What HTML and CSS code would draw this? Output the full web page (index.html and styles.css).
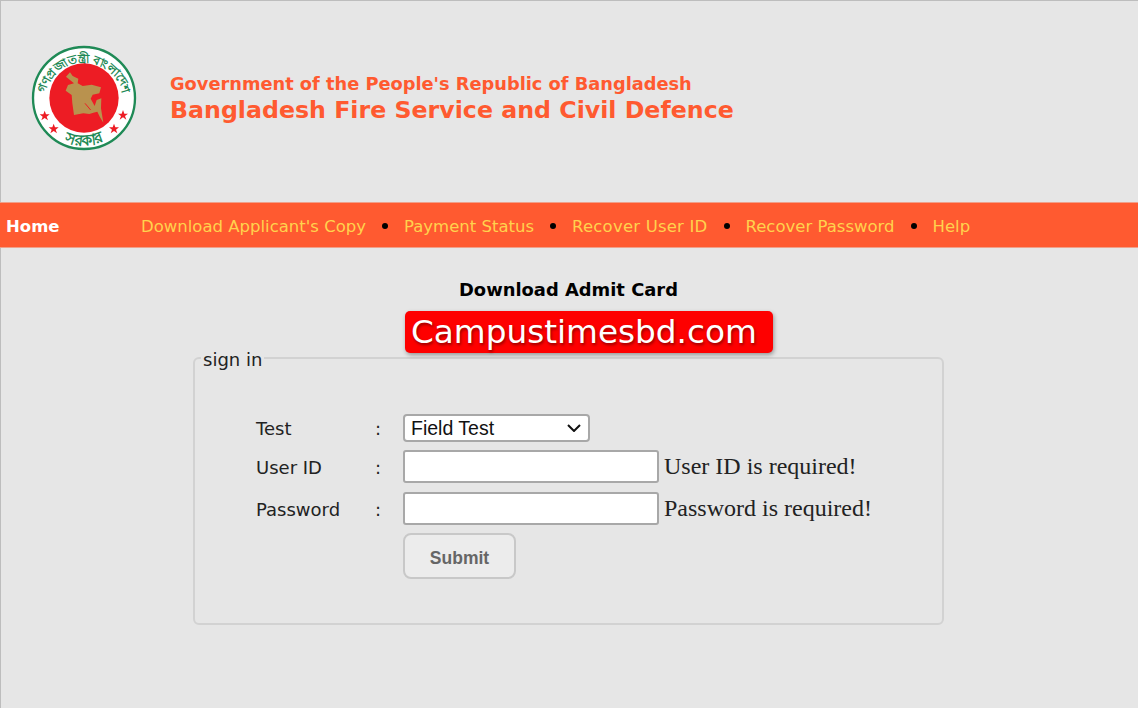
FILE: index.html
```html
<!DOCTYPE html>
<html lang="en">
<head>
<meta charset="utf-8">
<title>Bangladesh Fire Service and Civil Defence</title>
<link rel="stylesheet" href="styles.css">
</head>
<body>
<div class="page">
  <header class="masthead">
    <svg class="seal" viewBox="93 132 324 324" aria-hidden="true">
      <circle cx="252" cy="294" r="153" fill="#fff" stroke="#1f8a56" stroke-width="7"/>
      <path id="arcTop" d="M134 306 A118 118 0 1 1 370 306" fill="none"/>
      <path id="arcBottom" d="M180 418 A143 143 0 0 0 324 418" fill="none"/>
      <text class="seal-text"><textPath href="#arcTop" startOffset="50%" text-anchor="middle">গণপ্রজাতন্ত্রী বাংলাদেশ</textPath></text>
      <text class="seal-text seal-text-low"><textPath href="#arcBottom" startOffset="50%" text-anchor="middle">সরকার</textPath></text>
      <circle cx="252" cy="294" r="104" fill="#ed1c24"/>
      <path d="M198 230 L210 217 L218 228 L235 236 L233 250 L248 258 L275 254 L303 262 L298 280 L278 284 L272 296 L284 318 L290 300 L304 295 L303 325 L310 368 L300 352 L292 335 L280 338 L268 342 L250 340 L222 345 L217 310 L215 285 L197 272 L204 255 L222 250 L210 240 Z" fill="#b9924e"/>
      <path d="M255 310 L272 330" stroke="#ed1c24" stroke-width="3" fill="none"/>
      <g fill="#ed1c24">
        <path d="M134 332 l4 11 h11 l-9 7 l4 11 l-10 -7 l-10 7 l4 -11 l-9 -7 h11 Z"/>
        <path d="M161 371 l4 11 h11 l-9 7 l4 11 l-10 -7 l-10 7 l4 -11 l-9 -7 h11 Z"/>
        <path d="M342 371 l4 11 h11 l-9 7 l4 11 l-10 -7 l-10 7 l4 -11 l-9 -7 h11 Z"/>
        <path d="M369 330 l4 11 h11 l-9 7 l4 11 l-10 -7 l-10 7 l4 -11 l-9 -7 h11 Z"/>
      </g>
    </svg>
    <div class="brand">
      <div class="brand-gov">Government of the People's Republic of Bangladesh</div>
      <div class="brand-org">Bangladesh Fire Service and Civil Defence</div>
    </div>
  </header>

  <nav class="nav">
    <a class="nav-home" href="#">Home</a>
    <div class="nav-links">
      <a href="#">Download Applicant's Copy</a>
      <span class="dot"></span>
      <a href="#">Payment Status</a>
      <span class="dot"></span>
      <a class="nav-wide" href="#">Recover User ID</a>
      <span class="dot"></span>
      <a href="#">Recover Password</a>
      <span class="dot"></span>
      <a href="#">Help</a>
    </div>
  </nav>

  <main class="content">
    <h1 class="title">Download Admit Card</h1>
    <div class="watermark">Campustimesbd.com</div>
    <fieldset class="panel">
      <legend>sign in</legend>
      <form class="form">
        <label class="lbl" for="test">Test</label>
        <span class="colon">:</span>
        <div class="field">
          <select id="test" class="select"><option>Field Test</option></select>
        </div>
        <label class="lbl" for="uid">User ID</label>
        <span class="colon">:</span>
        <div class="field">
          <input id="uid" class="input" type="text">
          <span class="err">User ID is required!</span>
        </div>
        <label class="lbl" for="pwd">Password</label>
        <span class="colon">:</span>
        <div class="field">
          <input id="pwd" class="input" type="password">
          <span class="err">Password is required!</span>
        </div>
        <div class="field actions">
          <button class="submit" type="button">Submit</button>
        </div>
      </form>
    </fieldset>
  </main>
</div>
</body>
</html>
```
FILE: styles.css
```css
* { box-sizing: border-box; }
html, body { margin: 0; height: 100%; }
body {
  background: #e6e6e6;
  font-family: "DejaVu Sans", Verdana, sans-serif;
  overflow: hidden;
}
.page {
  height: 708px;
  border-top: 1px solid #bdbdbd;
  border-left: 1px solid #bdbdbd;
}
.masthead {
  height: 201px;
  display: flex;
  align-items: flex-start;
  padding: 43px 0 0 30px;
}
.seal { width: 108px; height: 108px; flex: none; }
.seal-text {
  font-family: "Noto Sans", "DejaVu Sans", sans-serif;
  font-size: 36px;
  font-weight: 700;
  fill: #1f8a56;
}
.seal-text-low { font-size: 46px; }
.brand { margin: 29px 0 0 31px; color: #ff5a30; font-weight: 700; }
.brand-gov { font-size: 17.8px; line-height: 22px; }
.brand-org { font-size: 23.7px; line-height: 31px; }
.nav {
  height: 46px;
  margin-left: -1px;
  padding-top: 2px;
  background: #ff5a30;
  border-top: 1px solid #f0a08a;
  border-bottom: 1px solid #f0a08a;
  display: flex;
  align-items: center;
  font-size: 16.5px;
}
.nav a { text-decoration: none; color: #ffd24d; white-space: nowrap; }
.nav .nav-home { color: #fff; font-weight: 700; width: 141px; padding-left: 6px; flex: none; }
.nav .nav-wide { letter-spacing: .2px; }
.nav-links { display: flex; align-items: center; }
.dot { width: 6px; height: 6px; border-radius: 50%; background: #000; margin: 0 16px; flex: none; }
.content { position: relative; padding-top: 31px; }
.title {
  margin: 0;
  font-size: 17.9px;
  line-height: 22px;
  font-weight: 700;
  color: #000;
  text-align: center;
  width: 1135px;
}
.watermark {
  position: absolute;
  left: 404px;
  top: 63px;
  width: 368px;
  height: 42px;
  padding: 0 0 0 6px;
  background: #fe0000;
  border-radius: 5px;
  color: #fff;
  font-family: "DejaVu Sans", sans-serif;
  font-size: 32.7px;
  line-height: 42px;
  white-space: nowrap;
  box-shadow: 1px 2px 4px rgba(0,0,0,.35);
  text-shadow: 1px 2px 3px rgba(120,0,0,.8);
}
.panel {
  margin: 45px 0 0 192px;
  width: 751px;
  height: 279px;
  padding: 0;
  border: 2px solid #d2d2d2;
  border-radius: 6px;
}
.panel legend {
  margin-left: 6px;
  padding: 4px 2px 0;
  font-size: 18px;
  line-height: 20px;
  color: #222;
}
.form {
  display: grid;
  grid-template-columns: 119px 28px 1fr;
  row-gap: 9px;
  align-items: center;
  padding: 44px 0 0 61px;
  font-size: 18px;
  color: #222;
}
.lbl, .colon { padding-top: 2px; }
.field { display: flex; align-items: center; }
.actions { grid-column: 3; }
.select {
  appearance: none;
  width: 187px;
  height: 28px;
  margin-bottom: -1px;
  padding: 0 6px;
  background: #fff url("data:image/svg+xml,%3Csvg xmlns='http://www.w3.org/2000/svg' width='14' height='8' viewBox='0 0 14 8'%3E%3Cpath d='M1 1l6 6 6-6' fill='none' stroke='%23111' stroke-width='2'/%3E%3C/svg%3E") no-repeat right 7px center;
  border: 2px solid #a8a8a8;
  border-radius: 4px;
  font-family: "Liberation Sans", Arial, sans-serif;
  font-size: 19.5px;
  color: #111;
}
.input {
  width: 256px;
  height: 33px;
  background: #fff;
  border: 2px solid #a8a8a8;
  border-radius: 3px;
}
.err {
  margin-left: 5px;
  font-family: "Liberation Serif", "Times New Roman", serif;
  font-size: 24px;
  color: #222;
  white-space: nowrap;
}
.submit {
  width: 113px;
  height: 46px;
  margin-top: -1px;
  padding: 4px 0 0;
  background: #ececec;
  border: 2px solid #c8c8c8;
  border-radius: 8px;
  color: #666;
  font-family: "Liberation Sans", Arial, sans-serif;
  font-size: 17.5px;
  font-weight: 700;
}
```
